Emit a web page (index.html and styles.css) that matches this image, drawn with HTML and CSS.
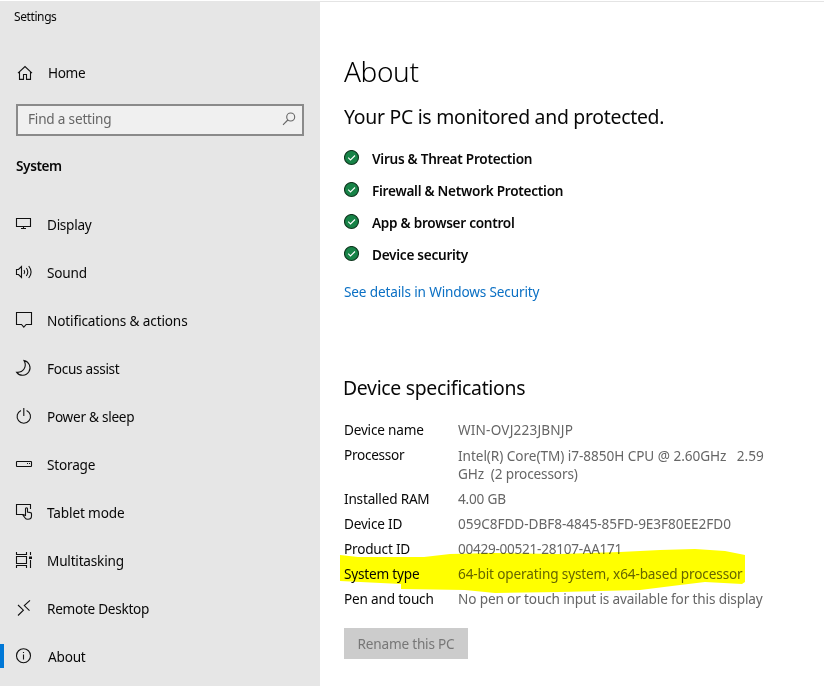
FILE: index.html
```html
<!DOCTYPE html>
<html lang="en">
<head>
<meta charset="utf-8">
<title>Settings</title>
<link rel="stylesheet" href="styles.css">
</head>
<body>
<div class="window">
  <aside class="sidebar">
    <div class="app-title">Settings</div>
    <a class="home"><svg class="icon" viewBox="0 0 16 16"><path d="M1 8.2 8 1.6 15 8.2M2.5 7V14.4H6.5V9.5H9.5V14.4H13.5V7"/></svg><span class="t-home">Home</span></a>
    <div class="search"><span class="t-find">Find a setting</span><svg class="icon grey" viewBox="0 0 16 16"><circle cx="9.7" cy="6" r="4"/><path d="M6.8 9 2 13.8"/></svg></div>
    <h2 class="group">System</h2>
    <nav class="nav">
      <a class="item"><svg class="icon" viewBox="0 0 16 16"><path d="M.5 2.5h14v8H.5zM7.5 10.500v2M5 12.500h5"/></svg><span class="t-display">Display</span></a>
      <a class="item"><svg class="icon" viewBox="0 0 16 16"><path d="M.5 5.500H2.500L5.500 2.500V13.500L2.500 10.500H.5zM8 6q1.400 2 0 4M10.300 4q3 4 0 8M12.700 2q4.800 6 0 12"/></svg><span class="t-sound">Sound</span></a>
      <a class="item"><svg class="icon" viewBox="0 0 16 16"><path d="M.5.5h15v12H10.200L7.800 15.200 5.500 12.500H.5z"/></svg><span class="t-notif">Notifications &amp; actions</span></a>
      <a class="item"><svg class="icon" viewBox="0 0 16 16"><path d="M8 .6A7.400 7.400 0 1 1 .7 12.300C7 12.800 11.500 7 8 .6z"/></svg><span class="t-focus">Focus assist</span></a>
      <a class="item"><svg class="icon" viewBox="0 0 16 16"><path d="M7.800 0V8M5 2.400a6.700 6.700 0 1 0 5.600 0"/></svg><span class="t-power">Power &amp; sleep</span></a>
      <a class="item"><svg class="icon" viewBox="0 0 16 16"><rect x=".5" y="5.500" width="15" height="5" rx=".5"/><path d="M11 7.500h1M13 7.500h1"/></svg><span class="t-storage">Storage</span></a>
      <a class="item"><svg class="icon" viewBox="0 0 16 16"><path d="M7 10.500H.5v-10h14V5M9.500 12V4.800a1 1 0 0 1 2 0V8l3 .6a1.200 1.200 0 0 1 1 1.200V12q0 3.300-3.600 3.300-2 0-3-1.600L7 11.200q.7-1.400 2.500.8"/></svg><span class="t-tablet">Tablet mode</span></a>
      <a class="item"><svg class="icon" viewBox="0 0 16 16"><path d="M.5 0V2.500h10V0M.5 4.500h10v7H.5zM.5 16V13.500h10V16M14.500 0v3M14.500 8v8"/><path class="solid" d="M13 4.500h3v2.500h-3z"/></svg><span class="t-multi">Multitasking</span></a>
      <a class="item"><svg class="icon" viewBox="0 0 16 16"><path d="M2 5 7.400 10.200 2 15.500M14 .3 8.300 5.600 13.500 10.600"/></svg><span class="t-remote">Remote Desktop</span></a>
      <a class="item selected"><svg class="icon" viewBox="0 0 16 16"><circle cx="7.500" cy="7.700" r="7"/><path d="M7.500 6.500V11.500M7.500 4V5"/></svg><span class="t-about">About</span></a>
    </nav>
  </aside>
  <main class="content">
    <h1><span>About</span></h1>
    <p class="status"><span>Your PC is monitored and protected.</span></p>
    <ul class="checks">
      <li><svg class="check" viewBox="0 0 16 16"><circle cx="7.500" cy="7.500" r="7"/><path d="M4.200 7.700 6.500 9.900 11 5.500"/></svg><span class="c1">Virus &amp; Threat Protection</span></li>
      <li><svg class="check" viewBox="0 0 16 16"><circle cx="7.500" cy="7.500" r="7"/><path d="M4.200 7.700 6.500 9.900 11 5.500"/></svg><span class="c2">Firewall &amp; Network Protection</span></li>
      <li><svg class="check" viewBox="0 0 16 16"><circle cx="7.500" cy="7.500" r="7"/><path d="M4.200 7.700 6.500 9.900 11 5.500"/></svg><span class="c3">App &amp; browser control</span></li>
      <li><svg class="check" viewBox="0 0 16 16"><circle cx="7.500" cy="7.500" r="7"/><path d="M4.200 7.700 6.500 9.900 11 5.500"/></svg><span class="c4">Device security</span></li>
    </ul>
    <a class="link"><span>See details in Windows Security</span></a>
    <h3><span>Device specifications</span></h3>
    <dl class="specs">
      <dt><span class="k1">Device name</span></dt><dd><span class="v1">WIN-OVJ223JBNJP</span></dd>
      <dt><span class="k2">Processor</span></dt><dd class="tall"><span class="v2">Intel(R) Core(TM) i7-8850H CPU @ 2.60GHz&nbsp;&nbsp; 2.59</span><br><span class="v3">GHz&nbsp; (2 processors)</span></dd>
      <dt><span class="k3">Installed RAM</span></dt><dd><span class="v4">4.00 GB</span></dd>
      <dt><span class="k4">Device ID</span></dt><dd><span class="v5">059C8FDD-DBF8-4845-85FD-9E3F80EE2FD0</span></dd>
      <dt><span class="k5">Product ID</span></dt><dd><span class="v6">00429-00521-28107-AA171</span></dd>
      <dt class="marked"><span class="k6">System type</span><svg class="marker" viewBox="0 0 406 45"><path d="M0 7 18 9H84L110 6 155 5 220 6 280 4 320 2 355 1 385 3 405 7V34L402 36 365 34 340 37 300 42 220 44 155 45 125 42 61 41V36L0 33z"/></svg></dt><dd><span class="v7">64-bit operating system, x64-based processor</span></dd>
      <dt><span class="k7">Pen and touch</span></dt><dd><span class="v8">No pen or touch input is available for this display</span></dd>
    </dl>
    <button class="rename" disabled><span>Rename this PC</span></button>
  </main>
</div>
</body>
</html>
```
FILE: styles.css
```css
* { box-sizing: border-box; }
body { margin: 0; background: #fff; color: #080808; font: 13.6px/20px "Noto Sans", "Open Sans", sans-serif; letter-spacing: -.2px; font-feature-settings: "liga" 1; }
h1, h2, h3, p, ul, dl, dd { margin: 0; padding: 0; font-weight: 400; }
.window { display: flex; height: 686px; border-top: 1px solid #fff; overflow: hidden; }
.sidebar { width: 320px; background: #e6e6e6; flex: none; }
.app-title { padding: 6px 14px 0; height: 48px; font-size: 12px; letter-spacing: -.4px; }
.icon { width: 16px; height: 16px; flex: none; fill: none; stroke: #111; stroke-width: 1.1; overflow: visible; }
.icon .solid { fill: #111; stroke: none; }
.icon.grey { stroke: #666; }
.home { display: flex; align-items: center; gap: 15px; height: 48px; padding-left: 17px; }
.search { display: flex; align-items: center; justify-content: space-between; width: 288px; height: 32px; margin: 7px 16px 0; padding: 0 5px 2px 10px; border: 2px solid #8a8a8a; background: #f0f0f0; color: #666; }
.group { margin: 20px 16px 0; height: 45px; font-size: 13.6px; font-weight: 600; letter-spacing: -.4px; }
.item { display: flex; align-items: center; gap: 15px; height: 48px; padding-left: 16px; position: relative; }
.item .icon { margin-bottom: 2px; }
.selected { gap: 16px; }
.selected::before { content: ""; position: absolute; left: 0; top: 11px; width: 4px; height: 24px; background: #0078d7; }
.content { flex: 1; padding: 49px 0 0 24px; border-top: 1px solid #e4e4e4; }
h1 { font-size: 28px; line-height: 40px; font-weight: 300; color: #000; letter-spacing: -.4px; }
.status { font-size: 19.4px; line-height: 28px; margin-top: 12px; letter-spacing: -.27px; }
.checks { list-style: none; margin-top: 12px; }
.checks li { display: flex; align-items: center; gap: 12px; height: 32px; font-weight: 600; letter-spacing: -.27px; }
.check { width: 16px; height: 16px; margin-bottom: 3px; fill: #178347; stroke: #10361f; stroke-width: 1.1; }
.check path { fill: none; stroke: #fff; }
.link { display: block; margin-top: 11px; color: #0b70c4; letter-spacing: -.15px; }
h3 { font-size: 19.4px; line-height: 28px; margin: 72px 0 0 -1px; letter-spacing: -.3px; }
.specs { display: grid; grid-template-columns: 114px 1fr; grid-template-rows: 25px 44px repeat(5, 25px); margin-top: 18px; }
.specs dd { color: #666; }
.specs .tall { line-height: 18px; padding-top: 2px; }
.marked { position: relative; }
.marker { position: absolute; left: -4px; top: -16px; width: 406px; height: 45px; fill: #ff0; mix-blend-mode: multiply; }
.rename { display: block; margin-top: 14px; width: 124px; height: 31px; border: 0; padding: 0; background: #ccc; color: #777; font: inherit; letter-spacing: inherit; }
span { white-space: nowrap; }
.t-home { letter-spacing: -.35px; }
.t-display, .t-focus, .t-power, .t-remote, .k2 { letter-spacing: -.28px; }
.t-notif, .t-tablet, .v3, .v7, .v8 { letter-spacing: -.14px; }
.v1 { letter-spacing: .18px; }
.v2, .v5 { letter-spacing: -.05px; }
.v6 { letter-spacing: -.28px; }
```
